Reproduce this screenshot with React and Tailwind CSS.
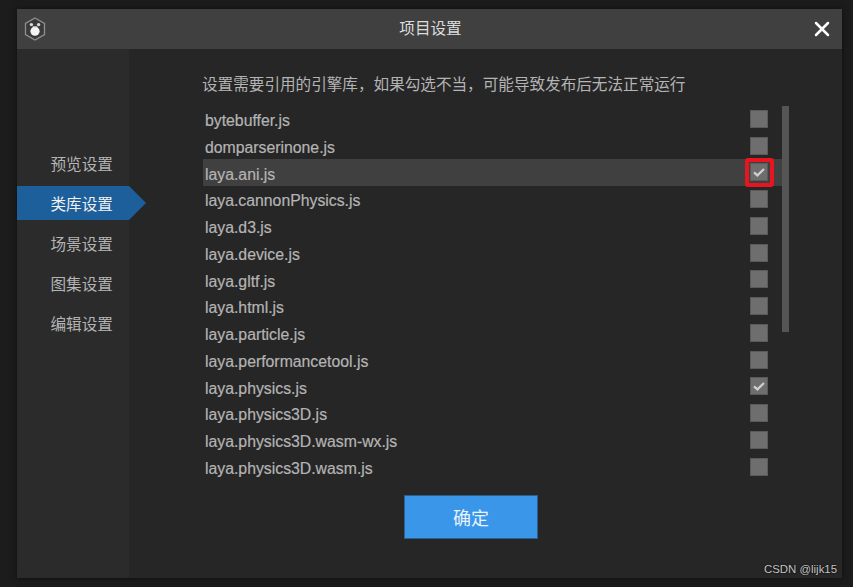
import { X } from 'lucide-react'

const libs = [
    { name: 'bytebuffer.js' },
    { name: 'domparserinone.js' },
    { name: 'laya.ani.js', checked: true, active: true },
    { name: 'laya.cannonPhysics.js' },
    { name: 'laya.d3.js' },
    { name: 'laya.device.js' },
    { name: 'laya.gltf.js' },
    { name: 'laya.html.js' },
    { name: 'laya.particle.js' },
    { name: 'laya.performancetool.js' },
    { name: 'laya.physics.js', checked: true },
    { name: 'laya.physics3D.js' },
    { name: 'laya.physics3D.wasm-wx.js' },
    { name: 'laya.physics3D.wasm.js' },
]

const tabs = ['预览设置', '类库设置', '场景设置', '图集设置', '编辑设置']

const cjk = "font-['Liberation_Sans','Noto_Sans_CJK_SC',sans-serif]"

function Logo() {
    return (
        <svg viewBox="0 0 22 24" className="w-[22px] h-6">
            <path d="M11 1 20.5 6.4V17.6L11 23 1.5 17.6V6.4Z" fill="#3a3a3a" stroke="#8f8f8f" strokeWidth="1.3" />
            <circle cx="11" cy="14.2" r="4.6" fill="#f4f4f4" />
            <circle cx="7.4" cy="7.6" r="1.7" fill="#d8d8d8" />
            <circle cx="14.6" cy="7.6" r="1.7" fill="#d8d8d8" />
            <path d="M8.5 9.5h5l-1 1.6h-3Z" fill="#e4e4e4" />
        </svg>
    )
}

function Tick() {
    return (
        <svg viewBox="0 0 14 14" className="w-3.5 h-3.5">
            <path d="M2 7.4 5.4 10.4 12 4" fill="none" stroke="#cfcfcf" strokeWidth="2.2" />
        </svg>
    )
}

export default function App() {
    return (
        <div className={`w-[853px] h-[587px] bg-[#1c1c1c] pt-[9px] pl-[17px] relative overflow-hidden ${cjk}`}>
            <div className="w-[825px] h-[569px] flex flex-col bg-[#262626] shadow-[0_0_6px_rgba(0,0,0,0.5)]">
                {/* Title bar */}
                <header className="h-10 shrink-0 bg-[#404040] flex items-center justify-between pl-[7px] pr-[8px]">
                    <Logo />
                    <span className="text-[15.6px] text-[#dddddd] ml-[5px]">项目设置</span>
                    <X size={24} strokeWidth={2.5} className="text-white" />
                </header>

                <div className="flex flex-1">
                    {/* Sidebar */}
                    <aside className="w-[112px] shrink-0 bg-[#2b2b2b] pt-[97px] flex flex-col gap-1.5 relative z-10">
                        {tabs.map((tab, i) => (
                            <div
                                key={tab}
                                className={`h-[34px] flex items-center pl-[33.5px] pt-1 text-[15.6px] ${i === 1
                                    ? 'w-[129px] bg-[#1d5f9b] text-[#f0f0f0] [clip-path:polygon(0_0,112px_0,100%_50%,112px_100%,0_100%)]'
                                    : 'text-[#b4b4b4]'
                                    }`}
                            >
                                {tab}
                            </div>
                        ))}
                    </aside>

                    {/* Main */}
                    <main className="flex-1 pl-[74px] pt-[25px]">
                        <p className="text-[15.6px] leading-[22px] text-[#b4b4b4] -ml-px">
                            设置需要引用的引擎库，如果勾选不当，可能导致发布后无法正常运行
                        </p>

                        <div className="flex mt-[9.5px]">
                            <div className="w-[579px]">
                                {libs.map((lib) => (
                                    <div
                                        key={lib.name}
                                        className={`h-[26.75px] flex items-center justify-between pl-0.5 pr-[14px] ${lib.active ? 'bg-[#404040]' : ''}`}
                                    >
                                        <span className="text-[15.8px] pt-1 text-[#b4b4b4] [-webkit-text-stroke:0.2px_#b4b4b4]">{lib.name}</span>
                                        <div className="relative w-[18px] h-[18px] bg-[#6e6e6e] border border-[#5a5a5a] flex items-center justify-center">
                                            {lib.checked && <Tick />}
                                            {lib.active && (
                                                <div className="absolute -inset-[6.5px] border-4 border-[#e8141f] rounded-[3px]" />
                                            )}
                                        </div>
                                    </div>
                                ))}
                            </div>
                            <div className="w-[7px] h-[226px] bg-[#555555]" />
                        </div>

                        <button className="block w-[134px] h-[44px] ml-[201px] mt-[15px] pt-1 bg-[#3a96e8] border border-[#2b5f8f] text-[18px] text-[#e8f3fd]">
                            确定
                        </button>
                    </main>
                </div>
            </div>

            {/* Watermark */}
            <span className="absolute right-[16px] bottom-[9px] text-[11.4px] text-[#c4c4c4] [text-shadow:0_0_2px_#000]">CSDN @lijk15</span>
        </div>
    )
}
